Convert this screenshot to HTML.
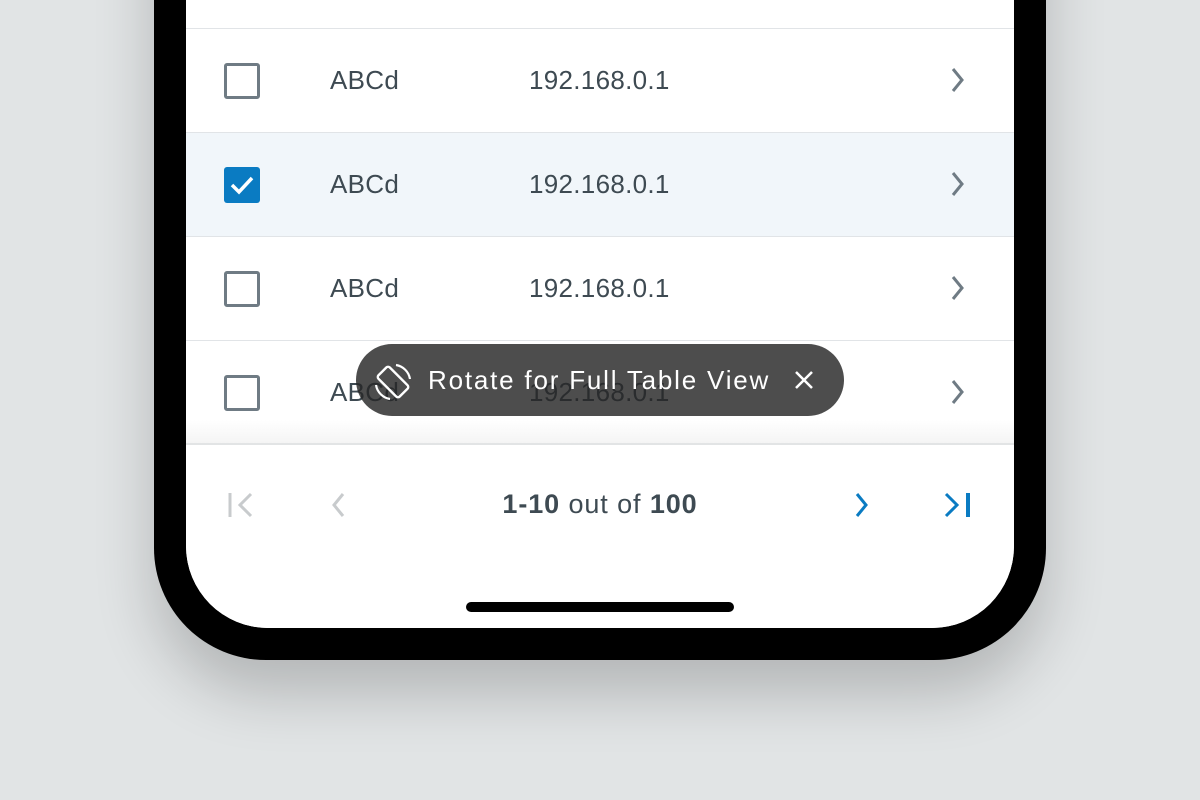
<!DOCTYPE html>
<html><head><style>
body{margin:0;width:1200px;height:800px;background:#e1e4e5;overflow:hidden;position:relative;font-family:"Liberation Sans",sans-serif}
.phone{position:absolute;left:154px;top:-200px;width:892px;height:860px;background:#000;border-radius:0 0 112px 112px;box-shadow:0 34px 60px rgba(0,0,0,0.2)}
.screen{position:absolute;left:186px;top:-100px;width:828px;height:728px;background:#fff;border-radius:0 0 82px 82px;overflow:hidden}
.row{position:absolute;left:0;width:828px;height:103px;border-top:1px solid #e1e4e7}
.sel{background:#f1f6fa}
.cb{position:absolute;left:38px;top:34px;width:30px;height:30px;border:3px solid #6f7b84;border-radius:3px}
.cbx{position:absolute;left:38px;top:34px;width:36px;height:36px;background:#0a7bc2;border-radius:3px}
.t1{position:absolute;left:144px;top:36px;font-size:26px;color:#3e4a52;letter-spacing:0.3px}
.t2{position:absolute;left:343px;top:36px;font-size:26px;color:#3e4a52;letter-spacing:0.3px}
.chev{position:absolute;left:762px;top:37px}
</style></head><body>
<div class="phone"></div>
<div class="screen">
 <div class="row" style="top:128px"><div class="cb"></div><div class="t1">ABCd</div><div class="t2">192.168.0.1</div><svg class="chev" width="20" height="28" viewBox="0 0 20 28"><path d="M5 3l9 11-9 11" fill="none" stroke="#6f7b84" stroke-width="3"/></svg></div>
 <div class="row sel" style="top:232px"><div class="cbx"><svg width="36" height="36"><path d="M8 18l7 7 13-14" fill="none" stroke="#fff" stroke-width="3.5"/></svg></div><div class="t1">ABCd</div><div class="t2">192.168.0.1</div><svg class="chev" width="20" height="28" viewBox="0 0 20 28"><path d="M5 3l9 11-9 11" fill="none" stroke="#6f7b84" stroke-width="3"/></svg></div>
 <div class="row" style="top:336px"><div class="cb"></div><div class="t1">ABCd</div><div class="t2">192.168.0.1</div><svg class="chev" width="20" height="28" viewBox="0 0 20 28"><path d="M5 3l9 11-9 11" fill="none" stroke="#6f7b84" stroke-width="3"/></svg></div>
 <div class="row" style="top:440px"><div class="cb"></div><div class="t1">ABCd</div><div class="t2">192.168.0.1</div><svg class="chev" width="20" height="28" viewBox="0 0 20 28"><path d="M5 3l9 11-9 11" fill="none" stroke="#6f7b84" stroke-width="3"/></svg></div>
 <div style="position:absolute;left:0;top:520px;width:828px;height:24px;background:linear-gradient(rgba(245,245,245,0),#f4f4f4)"></div>
 <div style="position:absolute;left:0;top:543px;width:828px;height:2px;background:#e2e4e5"></div>
 <div style="position:absolute;left:0;top:545px;width:828px;height:183px;background:#fff"></div>
 <svg style="position:absolute;left:40px;top:591px" width="32" height="28"><path d="M4 2v24" stroke="#c8cbcd" stroke-width="3"/><path d="M25 3l-11 11 11 11" fill="none" stroke="#c8cbcd" stroke-width="3"/></svg>
 <svg style="position:absolute;left:142px;top:591px" width="20" height="28"><path d="M15 3l-9 11 9 11" fill="none" stroke="#c8cbcd" stroke-width="3"/></svg>
 <div style="position:absolute;left:0;width:828px;top:589px;text-align:center;font-size:27px;letter-spacing:0.9px;color:#3e4a52"><b>1-10</b> out of <b>100</b></div>
 <svg style="position:absolute;left:666px;top:591px" width="20" height="28"><path d="M5 3l9 11-9 11" fill="none" stroke="#0a7bc2" stroke-width="3"/></svg>
 <svg style="position:absolute;left:756px;top:591px" width="32" height="28"><path d="M4 3l11 11-11 11" fill="none" stroke="#0a7bc2" stroke-width="3"/><path d="M26 2v24" stroke="#0a7bc2" stroke-width="4"/></svg>
 <div style="position:absolute;left:280px;top:702px;width:268px;height:10px;border-radius:5px;background:#000"></div>
</div>
<div style="position:absolute;left:356px;top:344px;width:488px;height:72px;border-radius:36px;background:rgba(38,38,38,0.82)"></div>
<svg style="position:absolute;left:372px;top:361px" width="42" height="42" viewBox="0 0 42 42"><g transform="rotate(-45 21 21)" fill="none" stroke="#fff" stroke-width="2.4"><rect x="13" y="6" width="16" height="30" rx="2.5"/></g><path d="M24 4a17 17 0 0 1 14 14" fill="none" stroke="#fff" stroke-width="2.2"/><path d="M18 38a17 17 0 0 1 -14 -14" fill="none" stroke="#fff" stroke-width="2.2"/></svg>
<div style="position:absolute;left:428px;top:365px;font-size:26px;letter-spacing:1.8px;color:#fff">Rotate for Full Table View</div>
<svg style="position:absolute;left:794px;top:370px" width="20" height="20"><path d="M2 2l16 16M18 2L2 18" stroke="#fff" stroke-width="2.5"/></svg>
</body></html>
